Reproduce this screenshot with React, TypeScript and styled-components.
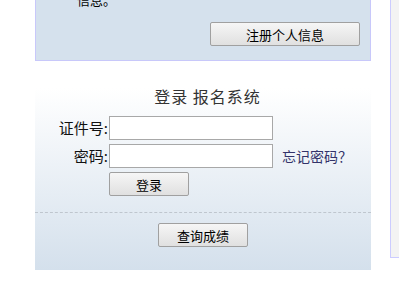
import React from 'react';
import styled, { createGlobalStyle } from 'styled-components';

const GlobalStyle = createGlobalStyle`
  html, body {
    margin: 0;
    padding: 0;
    overflow: hidden;
    background: #ffffff;
  }
  body {
    font-family: "Noto Sans CJK SC", "Liberation Sans", sans-serif;
    color: #000;
  }
`;

const Page = styled.div`
  display: flex;
  align-items: flex-start;
  margin-top: -31px;
  width: 399px;
`;

const MainColumn = styled.div`
  margin-left: 35px;
  width: 336px;
  flex-shrink: 0;
  display: flex;
  flex-direction: column;
  gap: 27px;
`;

// sidebar box continues past the right edge of the frame
const SideBox = styled.div`
  margin-left: 19px;
  flex: 1;
  height: 287px;
  border: 1px solid #ccccff;
  border-right: none;
  background: #f3f3f3;
`;

const NoticePanel = styled.div`
  border: 1px solid #c8c8fa;
  background: #d5e1ed;
  padding: 20px 10px 14px 41px;
`;

const NoticeText = styled.p`
  margin: 0;
  font-size: 13px;
  line-height: 20px;
`;

const ButtonRow = styled.div`
  display: flex;
  justify-content: flex-end;
  margin-top: 12px;
`;

const Button = styled.button<{ $width: number }>`
  width: ${({ $width }) => $width}px;
  height: 24px;
  padding: 0;
  border: 1px solid #a0a0a0;
  border-radius: 2px;
  background: linear-gradient(#f6f6f6, #e0e0e0);
  font-family: "Noto Sans CJK SC", "Liberation Sans", sans-serif;
  font-size: 13px;
  color: #000;
  cursor: pointer;
`;

const LoginPanel = styled.div`
  background: linear-gradient(#ffffff, #d4e0ec);
  display: flex;
  flex-direction: column;
  height: 182px;
`;

const Title = styled.div`
  text-align: center;
  font-size: 16px;
  line-height: 17px;
  letter-spacing: 1px;
  color: #333;
  padding-left: 9px;
  margin-bottom: 11px;
`;

const Form = styled.div`
  display: grid;
  grid-template-columns: 74px auto 1fr;
  grid-auto-rows: 24px;
  row-gap: 4px;
  align-items: center;
`;

const Label = styled.label`
  text-align: right;
  font-size: 15px;
  line-height: 24px;
  color: #111;
  padding-right: 1px;
`;

const Input = styled.input`
  box-sizing: border-box;
  width: 164px;
  height: 24px;
  border: 1px solid #a8a8a8;
  background: #fff;
  padding: 0 3px;
  margin: 0;
  font-size: 13px;
`;

const ForgotLink = styled.a`
  margin-left: 9px;
  font-size: 14px;
  color: #33336a;
  text-decoration: none;
  cursor: pointer;
`;

const Divider = styled.div`
  border-top: 1px dashed #bfc6ce;
  margin-top: 16px;
`;

const QueryRow = styled.div`
  display: flex;
  justify-content: center;
  margin-top: 10px;
`;

export default function App() {
  return (
    <>
      <GlobalStyle />
      <Page>
        <MainColumn>
          <NoticePanel>
            <NoticeText>信息。</NoticeText>
            <ButtonRow>
              <Button $width={150}>注册个人信息</Button>
            </ButtonRow>
          </NoticePanel>
          <LoginPanel>
            <Title>登录 报名系统</Title>
            <Form>
              <Label>证件号:</Label>
              <Input type="text" />
              <span />
              <Label>密码:</Label>
              <Input type="password" />
              <ForgotLink>忘记密码？</ForgotLink>
              <span />
              <Button $width={80}>登录</Button>
              <span />
            </Form>
            <Divider />
            <QueryRow>
              <Button $width={90}>查询成绩</Button>
            </QueryRow>
          </LoginPanel>
        </MainColumn>
        <SideBox />
      </Page>
    </>
  );
}
